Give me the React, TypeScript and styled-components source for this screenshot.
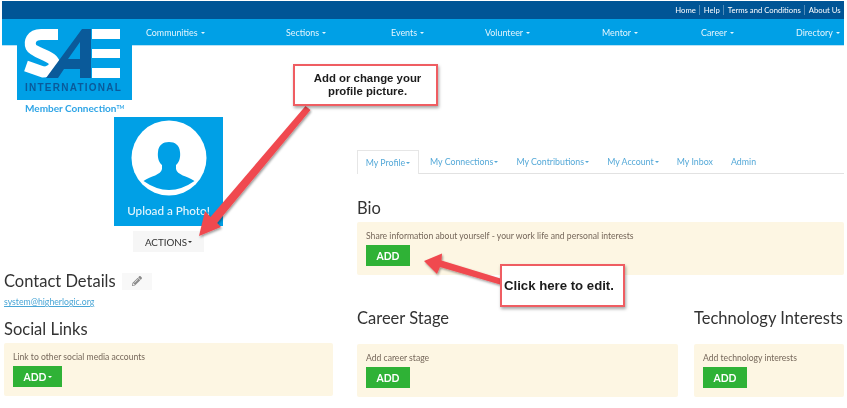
import React from "react";
import styled, { createGlobalStyle } from "styled-components";
import { FaPencilAlt } from "react-icons/fa";

const Global = createGlobalStyle`
  html, body { margin: 0; padding: 0; background: #fff; }
  body { font-family: Lato, "Liberation Sans", sans-serif; }
`;

const Page = styled.div`
  position: relative;
  width: 847px;
  height: 408px;
  overflow: hidden;
  background: #fff;
  padding: 1px 3px 0 2px;
  box-sizing: border-box;
  filter: blur(0.3px);
`;

const TopBar = styled.div`
  height: 18px;
  background: #005596;
  display: flex;
  justify-content: flex-end;
  align-items: center;
  padding-right: 0;
`;
const TopLink = styled.a`
  font-size: 7.7px;
  color: #fff;
  padding: 0 3.5px;
  line-height: 10px;
  border-left: 1px solid #4f8bb8;
  &:first-child { border-left: 0; }
`;

const Nav = styled.nav`
  height: 26px;
  background: #00a0e6;
  display: grid;
  grid-template-columns: 140px 105px 94px 117px 99px 95px auto;
  align-items: center;
  padding-left: 144px;
  border-bottom: 1px solid #b8e2f6;
`;
const NavItem = styled.a`
  font-size: 8.9px;
  color: #e4f5fd;
  white-space: nowrap;
`;
const Caret = styled.span<{ $size?: number }>`
  display: inline-block;
  width: 0;
  height: 0;
  margin-left: ${(p) => (p.$size ? 1 : 3)}px;
  vertical-align: middle;
  border-top: ${(p) => p.$size ?? 2}px solid currentColor;
  border-left: ${(p) => p.$size ?? 2}px solid transparent;
  border-right: ${(p) => p.$size ?? 2}px solid transparent;
`;

const LogoWrap = styled.div`
  position: absolute;
  left: 17px;
  top: 25px;
  width: 125px;
`;
const LogoBrand = styled.text`
  font-family: "Liberation Sans", sans-serif;
  font-weight: 700;
  font-size: 10px;
  letter-spacing: 1.25px;
  fill: #0a5a9a;
`;
const LogoTag = styled.div`
  font-size: 10px;
  font-weight: 700;
  color: #2fa5e6;
  padding-left: 8px;
  margin-top: 2px;
  white-space: nowrap;
  line-height: 12px;
`;
const Tm = styled.sup`
  font-size: 5px;
  vertical-align: 3px;
  line-height: 0;
`;

const Main = styled.main`
  display: grid;
  grid-template-columns: 329px 487px;
  column-gap: 24px;
  padding-left: 2px;
`;

const LeftCol = styled.section`
  padding-top: 71px;
  display: flex;
  flex-direction: column;
`;
const Photo = styled.div`
  align-self: center;
  width: 109px;
  height: 109px;
  background: #00a0e6;
  display: flex;
  flex-direction: column;
  align-items: center;
  padding-top: 3px;
  box-sizing: border-box;
`;
const PhotoCaption = styled.div`
  margin-top: 6px;
  color: #e6f6fd;
  font-size: 11.7px;
  font-weight: 500;
  line-height: 16px;
`;
const Actions = styled.div`
  align-self: center;
  margin-top: 5px;
  width: 71px;
  height: 21px;
  background: #f6f6f6;
  color: #333;
  font-size: 9.8px;
  display: flex;
  align-items: center;
  justify-content: center;
`;

const ContactRow = styled.div`
  display: flex;
  align-items: center;
  margin-top: 18px;
  height: 22px;
`;
const Heading = styled.h2`
  margin: 0;
  font-size: 16.5px;
  line-height: 22px;
  font-weight: 400;
  color: #333;
  white-space: nowrap;
`;
const EditButton = styled.div`
  margin-left: 6px;
  width: 30px;
  height: 17px;
  background: #f8f8f8;
  color: #8a8a8a;
  font-size: 10px;
  display: flex;
  align-items: center;
  justify-content: center;
`;
const Email = styled.a`
  margin-top: 4px;
  font-size: 8.7px;
  line-height: 12px;
  color: #4aa6d6;
  text-decoration: underline;
`;
const SocialHeading = styled(Heading)`
  margin-top: 10px;
`;

const Well = styled.div<{ $h?: number; $mt?: number }>`
  margin-top: ${(p) => p.$mt ?? 3}px;
  height: ${(p) => p.$h ?? 53}px;
  background: #fdf6e3;
  border-radius: 2px;
  padding: 9px 9px 0;
  box-sizing: border-box;
  overflow: hidden;
`;
const WellText = styled.div`
  font-size: 8.6px;
  line-height: 11px;
  color: #75675a;
  white-space: nowrap;
`;
const AddButton = styled.div<{ $w?: number }>`
  margin-top: 3px;
  width: ${(p) => p.$w ?? 44}px;
  height: 21px;
  background: #2fb236;
  color: #fff;
  font-size: 10.4px;
  font-weight: 700;
  display: flex;
  align-items: center;
  justify-content: center;
`;

const RightCol = styled.section`
  padding-top: 104px;
  display: flex;
  flex-direction: column;
`;
const Tabs = styled.div`
  height: 23px;
  display: flex;
  border-bottom: 1px solid #e2e2e2;
`;
const Tab = styled.a<{ $active?: boolean; $ml?: number }>`
  font-size: 8.8px;
  color: #55a9d8;
  white-space: nowrap;
  margin-left: ${(p) => p.$ml ?? 18.2}px;
  display: flex;
  align-items: center;
  height: ${(p) => (p.$active ? 24 : 23)}px;
  ${(p) =>
    p.$active &&
    `
    margin-left: 0;
    width: 62px;
    justify-content: center;
    box-sizing: border-box;
    background: #fff;
    border: 1px solid #e6e6e6;
    border-bottom: 0;
  `}
`;
const BioHeading = styled(Heading)`
  margin-top: 23px;
`;
const Pair = styled.div`
  margin-top: 32px;
  display: grid;
  grid-template-columns: 321px 150px;
  column-gap: 16px;
`;
const Stack = styled.div``;
const PairWell = styled(Well)`
  margin-top: 15px;
`;

const Overlay = styled.svg`
  position: absolute;
  left: 0;
  top: 0;
  pointer-events: none;
`;
const Callout = styled.div<{ $x: number; $y: number; $w: number; $h: number; $align: string }>`
  position: absolute;
  left: ${(p) => p.$x}px;
  top: ${(p) => p.$y}px;
  width: ${(p) => p.$w}px;
  height: ${(p) => p.$h}px;
  box-sizing: border-box;
  background: #fff;
  border: 2px solid #ef5d62;
  box-shadow: 1px 2px 3px rgba(0, 0, 0, 0.35);
  font-family: "Liberation Sans", sans-serif;
  font-weight: 700;
  color: #1c1c1c;
  text-align: ${(p) => p.$align};
  white-space: nowrap;
`;
const CalloutOne = styled(Callout)`
  font-size: 11.4px;
  line-height: 13px;
  padding: 6px 0 0 4px;
`;
const CalloutTwo = styled(Callout)`
  font-size: 13.2px;
  line-height: 15px;
  padding: 12px 0 0 2px;
`;

const navItems = ["Communities", "Sections", "Events", "Volunteer", "Mentor", "Career", "Directory"];
const topLinks = ["Home", "Help", "Terms and Conditions", "About Us"];

export default function App() {
  return (
    <Page>
      <Global />
      <TopBar>
        {topLinks.map((l) => (
          <TopLink key={l}>{l}</TopLink>
        ))}
      </TopBar>
      <Nav>
        {navItems.map((n) => (
          <NavItem key={n}>
            {n}
            <Caret />
          </NavItem>
        ))}
      </Nav>
      <Main>
        <LeftCol>
          <Photo>
            <svg width="76" height="76" viewBox="0 0 76 76">
              <circle cx="38" cy="38" r="37.5" fill="#fff" />
              <path
                d="M12.5 61 C20 56 30 55 31 49 L31 45 C27 42 26.5 36 27 32 C27.5 25 32 22 38 22 C44 22 48.5 25 49 32 C49.5 36 49 42 45 45 L45 49 C46 55 56 56 63.5 61 Q38 79 12.5 61 Z"
                fill="#00a0e6"
              />
            </svg>
            <PhotoCaption>Upload a Photo!</PhotoCaption>
          </Photo>
          <Actions>
            ACTIONS
            <Caret $size={2} />
          </Actions>
          <ContactRow>
            <Heading>Contact Details</Heading>
            <EditButton>
              <FaPencilAlt />
            </EditButton>
          </ContactRow>
          <Email>system@higherlogic.org</Email>
          <SocialHeading>Social Links</SocialHeading>
          <Well>
            <WellText>Link to other social media accounts</WellText>
            <AddButton $w={49}>
              ADD
              <Caret $size={2} />
            </AddButton>
          </Well>
        </LeftCol>
        <RightCol>
          <Tabs>
            <Tab $active>
              My Profile
              <Caret $size={2} />
            </Tab>
            <Tab $ml={11}>
              My Connections
              <Caret $size={2} />
            </Tab>
            <Tab>
              My Contributions
              <Caret $size={2} />
            </Tab>
            <Tab>
              My Account
              <Caret $size={2} />
            </Tab>
            <Tab>My Inbox</Tab>
            <Tab>Admin</Tab>
          </Tabs>
          <BioHeading>Bio</BioHeading>
          <Well>
            <WellText>Share information about yourself - your work life and personal interests</WellText>
            <AddButton>ADD</AddButton>
          </Well>
          <Pair>
            <Stack>
              <Heading>Career Stage</Heading>
              <PairWell>
                <WellText>Add career stage</WellText>
                <AddButton>ADD</AddButton>
              </PairWell>
            </Stack>
            <Stack>
              <Heading>Technology Interests</Heading>
              <PairWell>
                <WellText>Add technology interests</WellText>
                <AddButton>ADD</AddButton>
              </PairWell>
            </Stack>
          </Pair>
        </RightCol>
      </Main>

      <LogoWrap>
        <svg width="115" height="75" viewBox="0 0 115 75" style={{ display: "block" }}>
          <rect x="0" y="0" width="115" height="75" fill="#00a0e6" />
          <path
            d="M41 9.5 L24 9.5 C14 9.5 12 17 14 22 C17 28 34 30 37 37 C39 43 32 47 26 47 L9 41"
            fill="none"
            stroke="#fff"
            strokeWidth="11"
          />
          <path d="M75 4 H103 V14 H75 Z M75 24 H103 V33 H75 Z M75 43 H103 V53 H75 Z" fill="#fff" />
          <path
            d="M29 53 L65 4 H74 V53 H63 V44 H47 L41 53 Z M63 17 L51 34 H63 Z"
            fill="#0a5a9a"
            fillRule="evenodd"
          />
          <LogoBrand x="8" y="66">INTERNATIONAL</LogoBrand>
        </svg>
        <LogoTag>
          Member Connection<Tm>TM</Tm>
        </LogoTag>
      </LogoWrap>

      <Overlay width="847" height="408" viewBox="0 0 847 408">
        <defs>
          <filter id="arrowShadow" x="-20%" y="-20%" width="140%" height="140%">
            <feDropShadow dx="1" dy="1.5" stdDeviation="1.2" floodColor="#000" floodOpacity="0.4" />
          </filter>
        </defs>
        <g filter="url(#arrowShadow)" fill="#f04a50">
          <path d="M305.5 106 L310.5 110 L217 223 L221 227 L199 236 L205 211 L210.5 217 Z" />
          <path d="M500.5 278.5 L500 284.5 L440 267 L437 274 L424 261 L442 253.5 L441.5 260.5 Z" />
        </g>
      </Overlay>
      <CalloutOne $x={293} $y={64} $w={145} $h={42} $align="center">
        Add or change your
        <br />
        profile picture.
      </CalloutOne>
      <CalloutTwo $x={500} $y={264} $w={125} $h={43} $align="left">
        Click here to edit.
      </CalloutTwo>
    </Page>
  );
}
